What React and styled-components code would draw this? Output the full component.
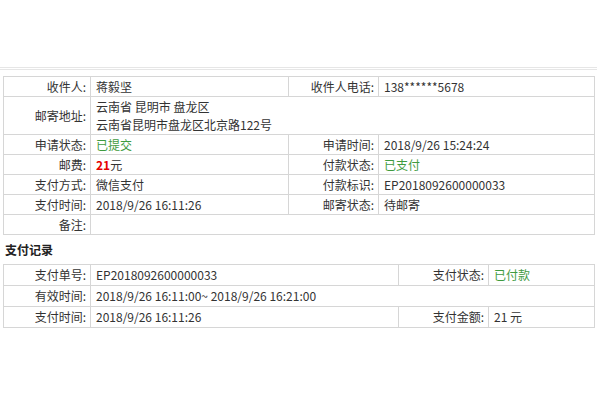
import React from 'react';
import styled, { createGlobalStyle } from 'styled-components';

const GlobalStyle = createGlobalStyle`
  body {
    margin: 0;
    background: #fff;
    font-family: "Microsoft YaHei", "Noto Sans CJK SC", "Noto Sans", sans-serif;
    font-size: 12px;
    color: #333;
  }
`;

const Page = styled.div`
  width: 600px;
  height: 400px;
  padding: 0 6px 0 3px;
  box-sizing: border-box;
`;

const TopBar = styled.div`
  height: 67px;
  margin: 0 -3px 0 -3px;
  border-bottom: 3px double #e6e6e6;
  margin-bottom: 6px;
`;

const Table = styled.table`
  width: 591px;
  table-layout: fixed;
  border-collapse: collapse;
  border: 1px solid #d6d6d6;
`;

const Row = styled.tr`
  height: ${p => p.$h || 20}px;
`;

const Label = styled.td`
  border: 1px solid #d6d6d6;
  text-align: right;
  padding: 0 4px 0 0;
  line-height: 18px;
  white-space: nowrap;
`;

const Value = styled.td`
  border: 1px solid #d6d6d6;
  padding: 0 0 0 5px;
  line-height: 18px;
  white-space: nowrap;
  color: ${p => (p.$green ? '#3f9b3f' : '#333')};
`;

const Price = styled.b`
  color: #e60000;
`;

const Title = styled.div`
  height: 29px;
  line-height: 29px;
  font-weight: bold;
  font-size: 12px;
  padding-left: 2px;
  color: #222;
`;

const Cols = ({ widths }) => (
  <colgroup>
    {widths.map((w, i) => (
      <col key={i} style={{ width: w }} />
    ))}
  </colgroup>
);

export default function App() {
  return (
    <Page>
      <GlobalStyle />
      <TopBar />
      <Table>
        <Cols widths={[87, 198, 90, 216]} />
        <tbody>
          <Row>
            <Label>收件人:</Label>
            <Value>蒋毅坚</Value>
            <Label>收件人电话:</Label>
            <Value>138******5678</Value>
          </Row>
          <Row $h={38}>
            <Label>邮寄地址:</Label>
            <Value colSpan={3}>
              云南省 昆明市 盘龙区
              <br />
              云南省昆明市盘龙区北京路122号
            </Value>
          </Row>
          <Row>
            <Label>申请状态:</Label>
            <Value $green>已提交</Value>
            <Label>申请时间:</Label>
            <Value>2018/9/26 15:24:24</Value>
          </Row>
          <Row>
            <Label>邮费:</Label>
            <Value>
              <Price>21</Price>元
            </Value>
            <Label>付款状态:</Label>
            <Value $green>已支付</Value>
          </Row>
          <Row>
            <Label>支付方式:</Label>
            <Value>微信支付</Value>
            <Label>付款标识:</Label>
            <Value>EP2018092600000033</Value>
          </Row>
          <Row>
            <Label>支付时间:</Label>
            <Value>2018/9/26 16:11:26</Value>
            <Label>邮寄状态:</Label>
            <Value>待邮寄</Value>
          </Row>
          <Row>
            <Label>备注:</Label>
            <Value colSpan={3}></Value>
          </Row>
        </tbody>
      </Table>
      <Title>支付记录</Title>
      <Table>
        <Cols widths={[87, 308, 90, 106]} />
        <tbody>
          <Row $h={21}>
            <Label>支付单号:</Label>
            <Value>EP2018092600000033</Value>
            <Label>支付状态:</Label>
            <Value $green>已付款</Value>
          </Row>
          <Row $h={21}>
            <Label>有效时间:</Label>
            <Value colSpan={3}>2018/9/26 16:11:00~ 2018/9/26 16:21:00</Value>
          </Row>
          <Row $h={21}>
            <Label>支付时间:</Label>
            <Value>2018/9/26 16:11:26</Value>
            <Label>支付金额:</Label>
            <Value>21 元</Value>
          </Row>
        </tbody>
      </Table>
    </Page>
  );
}
